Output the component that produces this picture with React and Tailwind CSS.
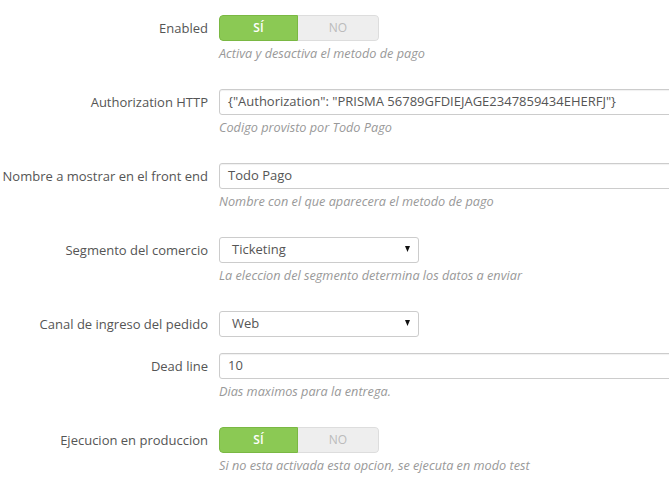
import React from "react";

const font = { fontFamily: '"Open Sans", "Noto Sans", sans-serif' };

function Toggle() {
  return (
    <div className="flex h-[26px] w-[160px] rounded-[4px] overflow-hidden text-[12px]">
      <div className="w-[79px] flex items-center justify-center bg-[#8bc954] border border-[#7ab843] rounded-l-[4px] text-white font-semibold">
        SÍ
      </div>
      <div className="flex-1 flex items-center justify-center bg-[#eeeeee] border border-l-0 border-[#dddddd] rounded-r-[4px] text-[#bbbbbb]">
        NO
      </div>
    </div>
  );
}

function Input({ value }) {
  return (
    <div className="h-[26px] w-[520px] shrink-0 flex items-center px-[8px] border border-[#cccccc] rounded-[3px] bg-white shadow-[inset_0_1px_1px_rgba(0,0,0,0.06)] text-[13px] text-[#555555] whitespace-nowrap">
      {value}
    </div>
  );
}

function Select({ value }) {
  return (
    <div className="h-[26px] w-[200px] flex items-center justify-between pl-[12px] pr-[8px] border border-[#cccccc] rounded-[3px] bg-white text-[13px] text-[#555555]">
      <span>{value}</span>
      <svg width="5" height="6" viewBox="0 0 5 6" className="mb-[2px]">
        <path d="M0 0 H5 L2.5 6 Z" fill="#111111" />
      </svg>
    </div>
  );
}

function Row({ label, help, children }) {
  return (
    <div className={help ? "mb-[25px]" : "mb-[16px]"}>
      <div className="flex items-center">
        <div className="w-[208px] shrink-0 text-right text-[13px] text-[#555555] whitespace-nowrap pt-[2px]">
          {label}
        </div>
        <div className="ml-[11px] flex">{children}</div>
      </div>
      {help && (
        <div className="ml-[219px] mt-[2px] leading-[21px] text-[12.7px] italic text-[#999999] whitespace-nowrap">
          {help}
        </div>
      )}
    </div>
  );
}

export default function App() {
  return (
    <div className="w-[669px] h-[480px] overflow-hidden bg-white pt-[15px]" style={font}>
      <Row label="Enabled" help="Activa y desactiva el metodo de pago">
        <Toggle />
      </Row>
      <Row label="Authorization HTTP" help="Codigo provisto por Todo Pago">
        <Input value={'{"Authorization": "PRISMA 56789GFDIEJAGE2347859434EHERFJ"}'} />
      </Row>
      <Row label="Nombre a mostrar en el front end" help="Nombre con el que aparecera el metodo de pago">
        <Input value="Todo Pago" />
      </Row>
      <Row label="Segmento del comercio" help="La eleccion del segmento determina los datos a enviar">
        <Select value="Ticketing" />
      </Row>
      <Row label="Canal de ingreso del pedido">
        <Select value="Web" />
      </Row>
      <Row label="Dead line" help="Dias maximos para la entrega.">
        <Input value="10" />
      </Row>
      <Row label="Ejecucion en produccion" help="Si no esta activada esta opcion, se ejecuta en modo test">
        <Toggle />
      </Row>
    </div>
  );
}
